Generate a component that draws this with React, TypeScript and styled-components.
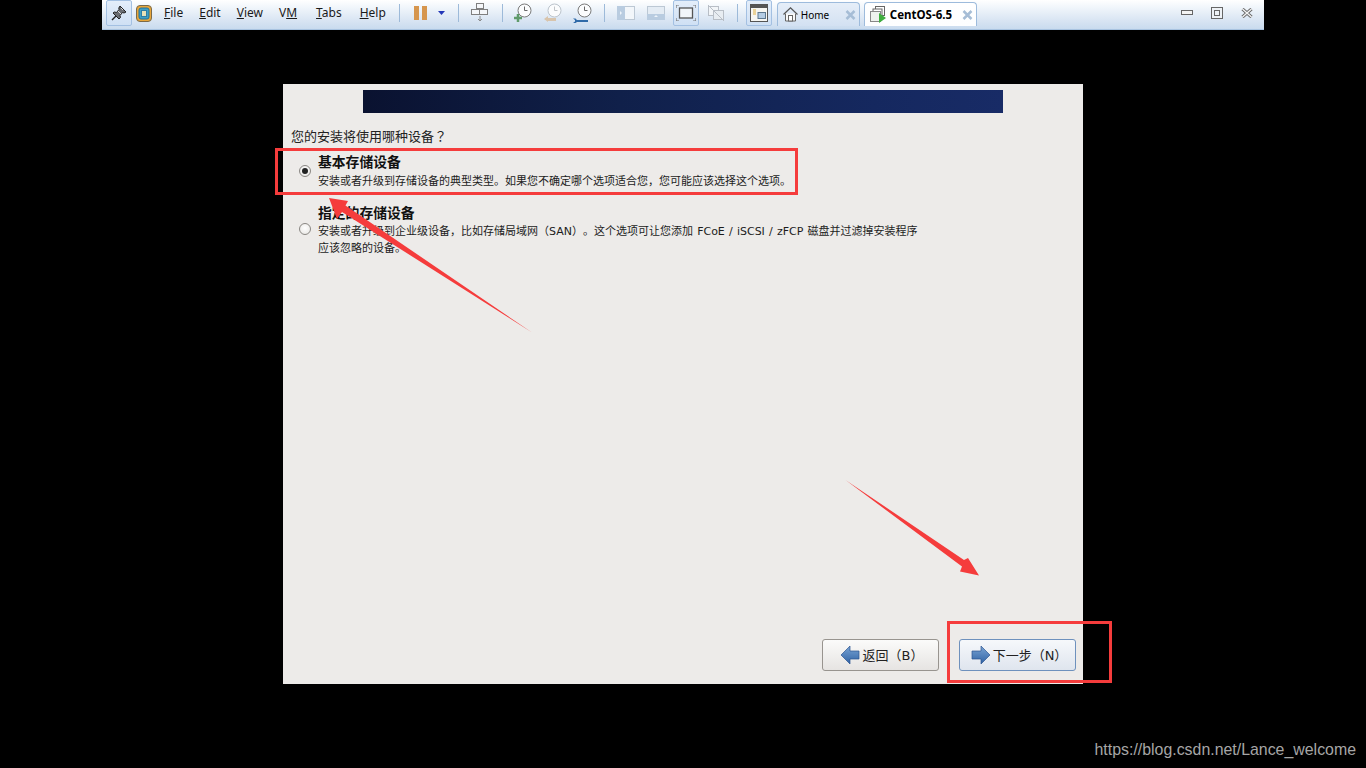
import React from "react";
import styled, { createGlobalStyle, css } from "styled-components";

const Global = createGlobalStyle`
  html, body { margin: 0; padding: 0; background: #000; }
  #root { width: 1366px; height: 768px; overflow: hidden; }
`;

const Page = styled.div`
  position: relative;
  width: 1366px;
  height: 768px;
  background: #000;
  display: flex;
  flex-direction: column;
  align-items: center;
`;

const Toolbar = styled.header`
  width: 1162px;
  height: 30px;
  box-sizing: border-box;
  flex: none;
  display: flex;
  align-items: flex-start;
  background: linear-gradient(#ffffff 0%, #f1f6fb 25%, #d9e5f3 70%, #c9dbee 100%);
  border-bottom: 1px solid #a8c3e0;
  font: 12px "Noto Sans", sans-serif;
  color: #1a1a1a;
`;

const Slot = styled.div<{ $w: number; $ml: number }>`
  flex: none;
  width: ${(p) => p.$w}px;
  height: 26px;
  margin-left: ${(p) => p.$ml}px;
  display: flex;
  align-items: center;
  justify-content: center;
  box-sizing: border-box;
`;

const ActiveSlot = styled(Slot)`
  border: 1px solid #a3c0e2;
  border-radius: 2px;
  background: linear-gradient(#e4eefa, #cfe0f4);
`;

const MenuItem = styled.span<{ $ml: number }>`
  flex: none;
  margin-left: ${(p) => p.$ml}px;
  height: 26px;
  line-height: 26px;
  white-space: nowrap;
  u { text-underline-offset: 1px; }
`;

const Sep = styled.i<{ $ml: number }>`
  flex: none;
  display: block;
  width: 1px;
  height: 18px;
  margin-top: 4px;
  margin-left: ${(p) => p.$ml}px;
  background: #9dbad9;
`;

const Tab = styled.div<{ $w: number; $ml: number; $active?: boolean }>`
  flex: none;
  box-sizing: border-box;
  width: ${(p) => p.$w}px;
  height: 24px;
  margin-top: 2px;
  margin-left: ${(p) => p.$ml}px;
  padding: 0 3px 0 5px;
  display: flex;
  align-items: center;
  gap: 3px;
  border: 1px solid #9dbbdc;
  border-bottom: none;
  border-radius: 4px 4px 0 0;
  color: #000;
  white-space: nowrap;
  ${(p) =>
    p.$active
      ? css`
          background: linear-gradient(#fff, #fdfeff);
          font-weight: 700;
          font-size: 11.5px;
        `
      : css`
          background: linear-gradient(#e6eef8, #d3e1f2);
          font-size: 10px;
        `}
`;

const TabClose = styled.span`
  margin-left: auto;
  display: flex;
`;

const Screen = styled.main`
  flex: none;
  width: 800px;
  height: 600px;
  margin-top: 54px;
  box-sizing: border-box;
  background: #edebe9;
  padding: 6px 7px 13px 8px;
  display: flex;
  flex-direction: column;
  font-family: "DejaVu Sans", "Noto Sans CJK SC", sans-serif;
  color: #111;
  text-spacing-trim: space-all;
`;

const Banner = styled.div`
  flex: none;
  width: 640px;
  height: 23px;
  margin-left: 72px;
  background: linear-gradient(90deg, #0a1230 0%, #10204a 40%, #15285f 80%, #182b66 100%);
`;

const Question = styled.div`
  margin-top: 15px;
  font-size: 13px;
  line-height: 16px;
  color: #222;
`;

const QuestionMark = styled.span`
  font-family: "Noto Sans CJK TC", sans-serif;
`;

const Option = styled.label<{ $mt: number }>`
  display: grid;
  grid-template-columns: 27px 1fr;
  align-items: center;
  margin-top: ${(p) => p.$mt}px;
`;

const Radio = styled.span<{ $checked?: boolean; $mb: number }>`
  grid-row: 1 / span 2;
  justify-self: start;
  margin: 0 0 ${(p) => p.$mb}px 8px;
  width: 12px;
  height: 12px;
  box-sizing: border-box;
  border-radius: 50%;
  border: 1px solid #8a8783;
  background: radial-gradient(circle at 50% 40%, #fff, #e6e4e1);
  display: flex;
  align-items: center;
  justify-content: center;
  &::after {
    content: "";
    display: ${(p) => (p.$checked ? "block" : "none")};
    width: 6px;
    height: 6px;
    border-radius: 50%;
    background: #222;
  }
`;

const OptionTitle = styled.div<{ $mb: number }>`
  grid-column: 2;
  font-size: 13.8px;
  font-weight: 700;
  line-height: 18px;
  margin-bottom: ${(p) => p.$mb}px;
  color: #111;
`;

const OptionDesc = styled.div`
  grid-column: 2;
  font-size: 11px;
  line-height: 17px;
  word-spacing: 0.7px;
  color: #1c1c1c;
  white-space: nowrap;
`;

const ButtonRow = styled.div`
  margin-top: auto;
  display: flex;
  justify-content: flex-end;
  gap: 20px;
`;

const Btn = styled.button<{ $primary?: boolean }>`
  width: 117px;
  height: 32px;
  box-sizing: border-box;
  padding: 0 0 1px 3px;
  display: flex;
  align-items: center;
  justify-content: center;
  gap: 3px;
  border-radius: 3px;
  font-family: "DejaVu Sans", "Noto Sans CJK SC", sans-serif;
  font-size: 13px;
  color: #222;
  text-spacing-trim: space-all;
  border: 1px solid ${(p) => (p.$primary ? "#6e91bd" : "#98948f")};
  background: ${(p) =>
    p.$primary
      ? "linear-gradient(#f6f8fb, #dfe5ee)"
      : "linear-gradient(#fbfbfa, #e6e4e2)"};
`;

const Annotations = styled.svg`
  position: absolute;
  left: 0;
  top: 0;
  pointer-events: none;
`;

const Watermark = styled.div`
  position: absolute;
  right: 10px;
  top: 740px;
  font: 15.9px/20px "Liberation Sans", sans-serif;
  color: #a6a6a6;
`;

const stroke = { fill: "none", stroke: "#6b6b6b", strokeWidth: 1 };

const Pin = () => (
  <svg width="16" height="16" viewBox="0 0 16 16">
    <path d="M9 1l6 6-2 1-1.500-.5L9 10.500l.5 2-1.500 1.500-6-6 1.500-1 2 .5L8 4.500 7.800 3z" fill="#6a6d72" stroke="#222" />
    <path d="M5 11l-4 4" stroke="#222" strokeWidth="1.500" />
    <path d="M10 3l2 2M7 6l3 3" stroke="#ddd" />
  </svg>
);

const VmLogo = () => (
  <svg width="16" height="17" viewBox="0 0 16 17">
    <rect x="0.500" y="0.500" width="15" height="16" rx="3.500" fill="#e8a63a" stroke="#7a6a4a" />
    <rect x="3" y="3" width="10" height="11" rx="2" fill="#3f9fc4" stroke="#23729a" />
    <rect x="5.500" y="5.500" width="5" height="6" fill="#e8e2b8" stroke="#2d7ea8" />
  </svg>
);

const Pause = () => (
  <svg width="13" height="14" viewBox="0 0 13 14">
    <rect width="5" height="14" fill="#d6964e" />
    <rect x="8" width="5" height="14" fill="#d6964e" />
  </svg>
);

const Caret = () => (
  <svg width="7" height="4" viewBox="0 0 7 4">
    <path d="M0 0h7L3.500 4z" fill="#2438b8" />
  </svg>
);

const Snap = () => (
  <svg width="18" height="20" viewBox="0 0 18 20">
    <g {...stroke} stroke="#7f7f7f" fill="#f5f7fa">
      <rect x="5.500" y="0.500" width="7" height="5" />
      <rect x="0.500" y="6.500" width="8" height="5" />
      <rect x="8.500" y="6.500" width="8" height="5" />
    </g>
    <path d="M9 13v5M7 16l2 2 2-2" {...stroke} stroke="#8a8a8a" />
  </svg>
);

const Clock = ({ c, dim, kind }: { c: string; dim?: boolean; kind: "plus" | "back" | "wrench" }) => (
  <svg width="20" height="20" viewBox="0 0 20 20">
    <circle cx="11.500" cy="7.500" r="6.500" fill="#fbfcfd" stroke={dim ? "#bcc4cc" : "#7a7a7a"} />
    <path d="M11.500 3.500v4h3" fill="none" stroke={dim ? "#c0c4c8" : "#666"} />
    {kind === "plus" && <path d="M5 11v8M1 15h8" stroke={c} strokeWidth="2.500" />}
    {kind === "back" && <path d="M1 16l4-3v2h8v3H5v1z" fill={c} />}
    {kind === "wrench" && <path d="M0 15.500h2.500l1.500 1.500h11v2H4l-1.500 1H0l2-1.500v-1.500z" fill={c} />}
  </svg>
);

const PanelLeft = () => (
  <svg width="18" height="14" viewBox="0 0 18 14">
    <rect x="0.500" y="0.500" width="17" height="13" fill="#f2f6fa" stroke="#bcc8d4" />
    <rect x="0" y="0" width="8" height="14" fill="#b9cce0" />
    <path d="M3 5l2 2-2 2z" fill="#eef4fa" />
  </svg>
);

const PanelBottom = () => (
  <svg width="18" height="14" viewBox="0 0 18 14">
    <rect x="0.500" y="0.500" width="17" height="13" fill="#e4ecf4" stroke="#bcc8d4" />
    <rect x="0" y="8" width="18" height="6" fill="#b9cce0" />
    <path d="M7 11l2-2 2 2z" fill="#eef4fa" />
  </svg>
);

const FullScreen = () => (
  <svg width="20" height="16" viewBox="0 0 20 16">
    <rect x="3.500" y="3" width="13" height="10" fill="#f1f5f9" stroke="#555" strokeWidth="1.300" />
    <path d="M0 3V0h3M17 0h3v3M20 13v3h-3M3 16H0v-3" fill="none" stroke="#777" strokeWidth="1.200" />
  </svg>
);

const NoUnity = () => (
  <svg width="18" height="18" viewBox="0 0 18 18">
    <rect x="1.500" y="2.500" width="10" height="9" fill="#f2f5f8" stroke="#b8bec6" />
    <rect x="6.500" y="6.500" width="10" height="9" fill="#e8edf2" stroke="#b8bec6" />
    <path d="M1 1l16 16" stroke="#b8bec6" />
  </svg>
);

const Library = () => (
  <svg width="18" height="18" viewBox="0 0 18 18">
    <rect x="0.500" y="0.500" width="17" height="17" fill="#f6f6f2" stroke="#555" />
    <rect x="0.500" y="0.500" width="17" height="3.500" fill="#555" />
    <path d="M3 6h3M3 8h3M3 10h3" stroke="#e0b040" />
    <rect x="8" y="8.500" width="7.500" height="6" fill="#b4cce4" stroke="#5d7890" />
  </svg>
);

const Home = () => (
  <svg width="15" height="15" viewBox="0 0 15 15">
    <path d="M.5 7.500L7.500.8l7 6.700" fill="none" stroke="#555" strokeWidth="1.200" />
    <path d="M2.500 6.500V14h10V6.500" fill="#f8f8f8" stroke="#666" />
    <rect x="5.500" y="8.500" width="4" height="5.500" fill="#fff" stroke="#666" />
  </svg>
);

const VmTab = () => (
  <svg width="17" height="17" viewBox="0 0 17 17">
    <rect x="5.500" y="0.500" width="9" height="9" fill="#fff" stroke="#666" />
    <rect x="3" y="3" width="9" height="9" fill="#fff" stroke="#666" />
    <rect x="0.500" y="5.500" width="10" height="10" fill="#eef2ee" stroke="#888" />
    <path d="M9 7l7 5-7 5z" fill="#3fae3f" />
  </svg>
);

const X = () => (
  <svg width="11" height="10" viewBox="0 0 11 10">
    <path d="M1.500 1l8 8M9.500 1l-8 8" stroke="#a6bdd6" strokeWidth="2.500" />
  </svg>
);

const WinMin = () => (
  <svg width="12" height="6" viewBox="0 0 12 6">
    <rect x="0.500" y="0.500" width="11" height="4" fill="#f4f4f4" stroke="#666" />
  </svg>
);
const WinMax = () => (
  <svg width="12" height="12" viewBox="0 0 12 12">
    <rect x="0.500" y="0.500" width="11" height="11" fill="#eef2f6" stroke="#666" />
    <rect x="3.500" y="3.500" width="5" height="5" fill="none" stroke="#666" />
  </svg>
);
const WinClose = () => (
  <svg width="12" height="10" viewBox="0 0 12 10">
    <path d="M1.500 1l9 8M10.500 1l-9 8" stroke="#666" strokeWidth="3.200" />
    <path d="M1.500 1l9 8M10.500 1l-9 8" stroke="#f4f4f4" strokeWidth="1.400" />
  </svg>
);

const ArrowIcon = ({ left }: { left?: boolean }) => (
  <svg width="19" height="20" viewBox="0 0 19 20">
    <defs>
      <linearGradient id={left ? "ga" : "gb"} x1="0" y1="0" x2="0" y2="1">
        <stop offset="0" stopColor="#7aa4d4" />
        <stop offset="1" stopColor="#2f62a4" />
      </linearGradient>
    </defs>
    <path
      d={left ? "M0 10L9 1v5h9v8H9v5z" : "M19 10L10 1v5H1v8h9v5z"}
      fill={`url(#${left ? "ga" : "gb"})`}
      stroke="#2b5590"
      strokeWidth="0.700"
    />
  </svg>
);

export default function App() {
  return (
    <Page>
      <Global />
      <Toolbar>
        <ActiveSlot $w={26} $ml={4}><Pin /></ActiveSlot>
        <Slot $w={16} $ml={4}><VmLogo /></Slot>
        <MenuItem $ml={12}><u>F</u>ile</MenuItem>
        <MenuItem $ml={16}><u>E</u>dit</MenuItem>
        <MenuItem $ml={16}><u>V</u>iew</MenuItem>
        <MenuItem $ml={16}>V<u>M</u></MenuItem>
        <MenuItem $ml={19}><u>T</u>abs</MenuItem>
        <MenuItem $ml={18}><u>H</u>elp</MenuItem>
        <Sep $ml={13} />
        <Slot $w={13} $ml={14}><Pause /></Slot>
        <Slot $w={7} $ml={11}><Caret /></Slot>
        <Sep $ml={13} />
        <Slot $w={18} $ml={12}><Snap /></Slot>
        <Sep $ml={13} />
        <Slot $w={20} $ml={10}><Clock c="#5f9a6a" kind="plus" /></Slot>
        <Slot $w={20} $ml={10}><Clock c="#d8c4ac" dim kind="back" /></Slot>
        <Slot $w={20} $ml={10}><Clock c="#2f6aa8" kind="wrench" /></Slot>
        <Sep $ml={11} />
        <Slot $w={18} $ml={12}><PanelLeft /></Slot>
        <Slot $w={18} $ml={12}><PanelBottom /></Slot>
        <ActiveSlot $w={26} $ml={8}><FullScreen /></ActiveSlot>
        <Slot $w={18} $ml={8}><NoUnity /></Slot>
        <Sep $ml={12} />
        <ActiveSlot $w={26} $ml={8}><Library /></ActiveSlot>
        <Tab $w={83} $ml={5}>
          <Home />
          Home
          <TabClose><X /></TabClose>
        </Tab>
        <Tab $w={113} $ml={4} $active>
          <VmTab />
          CentOS-6.5
          <TabClose><X /></TabClose>
        </Tab>
        <Slot $w={12} $ml={204}><WinMin /></Slot>
        <Slot $w={12} $ml={18}><WinMax /></Slot>
        <Slot $w={12} $ml={18}><WinClose /></Slot>
      </Toolbar>

      <Screen>
        <Banner />
        <Question>您的安装将使用哪种设备<QuestionMark>？</QuestionMark></Question>
        <Option $mt={8}>
          <Radio $checked $mb={2} />
          <OptionTitle $mb={2}>基本存储设备</OptionTitle>
          <OptionDesc>安装或者升级到存储设备的典型类型。如果您不确定哪个选项适合您，您可能应该选择这个选项。</OptionDesc>
        </Option>
        <Option $mt={14}>
          <Radio $mb={4} />
          <OptionTitle $mb={1}>指定的存储设备</OptionTitle>
          <OptionDesc>
            安装或者升级到企业级设备，比如存储局域网（SAN）。这个选项可让您添加 FCoE / iSCSI / zFCP 磁盘并过滤掉安装程序
            <br />
            应该忽略的设备。
          </OptionDesc>
        </Option>
        <ButtonRow>
          <Btn>
            <ArrowIcon left />
            返回（B）
          </Btn>
          <Btn $primary>
            <ArrowIcon />
            下一步（N）
          </Btn>
        </ButtonRow>
      </Screen>

      <Annotations width="1366" height="768" viewBox="0 0 1366 768">
        <g fill="none" stroke="#f53c3c" strokeWidth="3">
          <rect x="276.500" y="149.500" width="520" height="44" />
          <rect x="948.500" y="622.500" width="162" height="59" />
        </g>
        <path d="M329 198L348 201 345.500 205.500 532 332.500 342 212 337 219z" fill="#f53c3c" />
        <path d="M845.500 480L964 560 968 558 979 575.500 960 571.500 962 566.500z" fill="#f53c3c" />
      </Annotations>
      <Watermark>https://blog.csdn.net/Lance_welcome</Watermark>
    </Page>
  );
}
